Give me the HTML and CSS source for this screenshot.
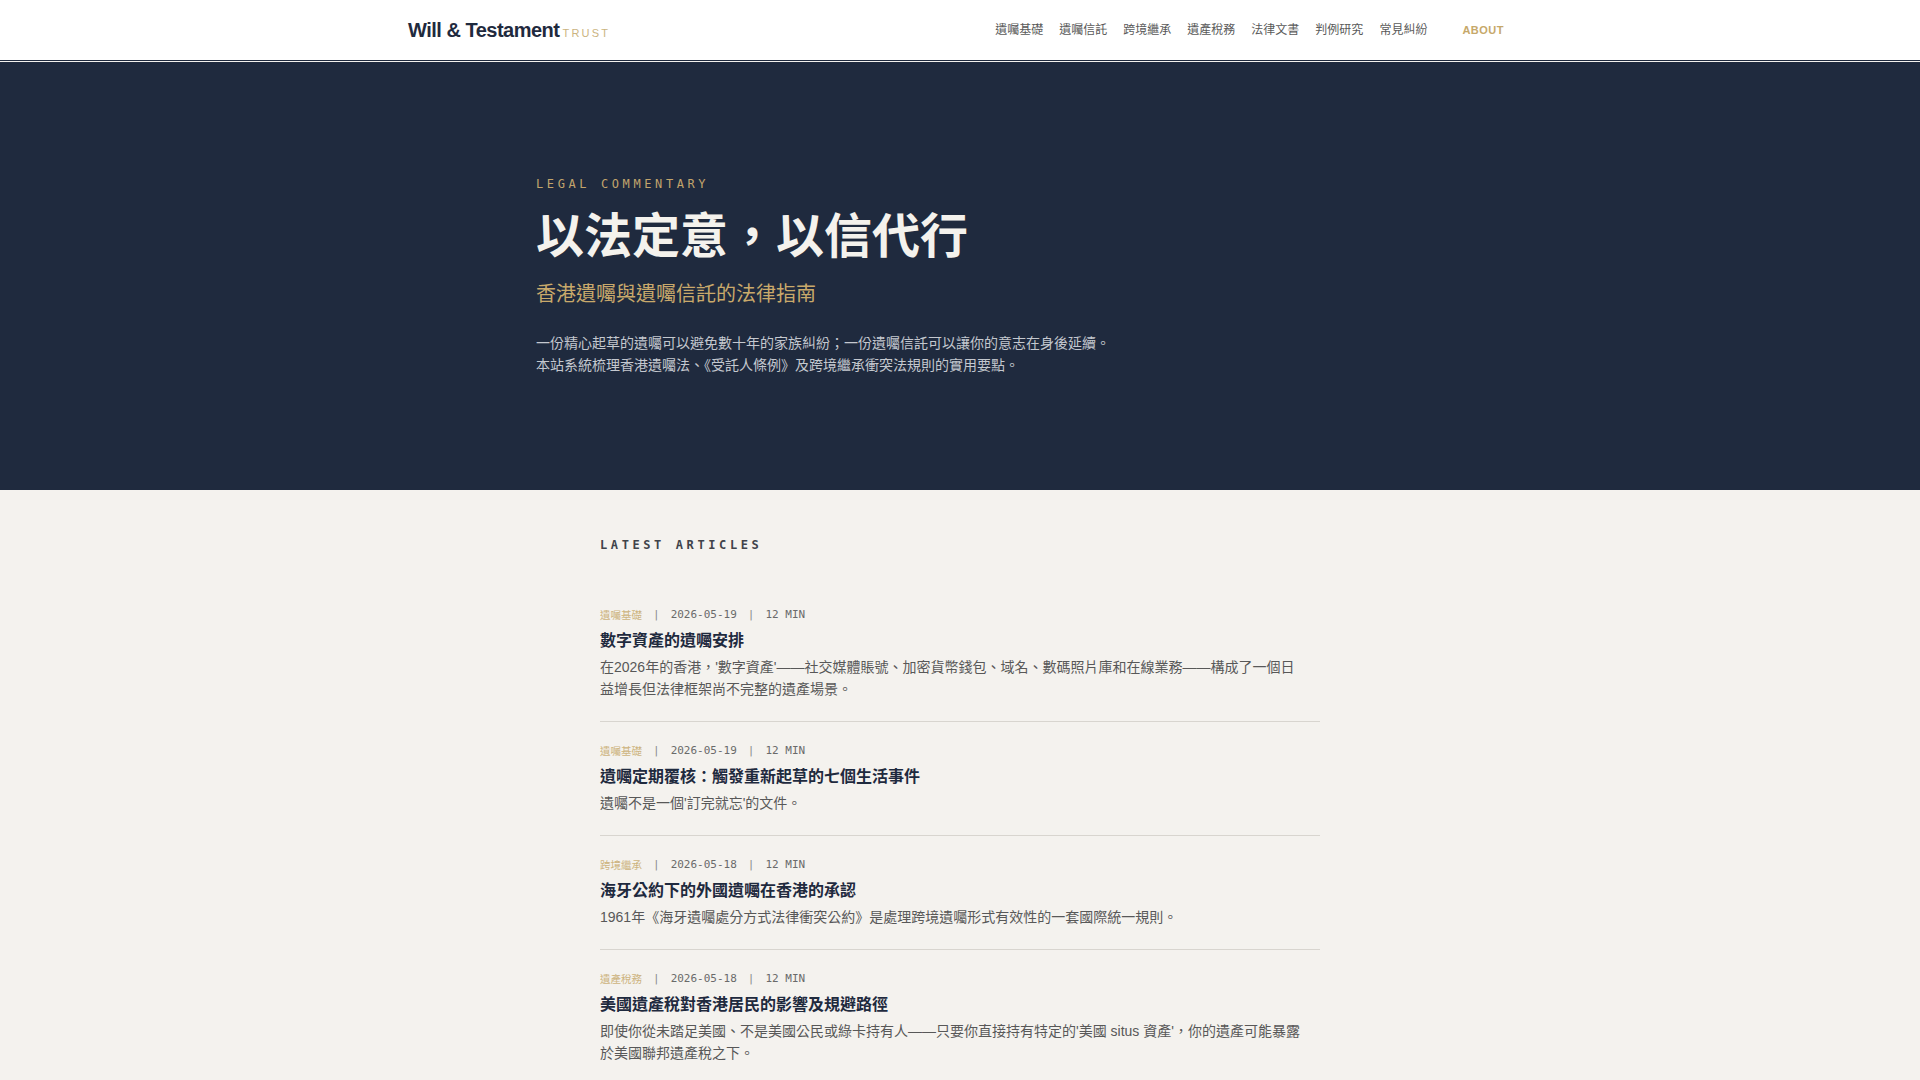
FILE: index.html
```html
<!DOCTYPE html>
<html lang="zh-Hant">
<head>
<meta charset="utf-8">
<title>Will &amp; Testament Trust</title>
<link rel="stylesheet" href="styles.css">
</head>
<body>
<header class="site-header">
  <div class="header-inner">
    <a class="logo" href="#"><span class="logo-main">Will &amp; Testament</span><span class="logo-sub">TRUST</span></a>
    <nav class="nav">
      <a href="#" class="nav-link">遺囑基礎</a>
      <a href="#" class="nav-link">遺囑信託</a>
      <a href="#" class="nav-link">跨境繼承</a>
      <a href="#" class="nav-link">遺產稅務</a>
      <a href="#" class="nav-link">法律文書</a>
      <a href="#" class="nav-link">判例研究</a>
      <a href="#" class="nav-link">常見糾紛</a>
      <a href="#" class="nav-link nav-about">ABOUT</a>
    </nav>
  </div>
</header>

<section class="hero">
  <div class="hero-inner">
    <p class="eyebrow">LEGAL COMMENTARY</p>
    <h1 class="hero-title">以法定意，以信代行</h1>
    <p class="hero-subtitle">香港遺囑與遺囑信託的法律指南</p>
    <p class="hero-text">一份精心起草的遺囑可以避免數十年的家族糾紛；一份遺囑信託可以讓你的意志在身後延續。<br>本站系統梳理香港遺囑法、《受託人條例》及跨境繼承衝突法規則的實用要點。</p>
  </div>
</section>

<main class="articles">
  <div class="articles-inner">
    <h2 class="section-title">LATEST ARTICLES</h2>

    <article class="article">
      <div class="meta"><span class="cat">遺囑基礎</span><span class="sep">|</span><span class="date">2026-05-19</span><span class="sep">|</span><span class="read">12 MIN</span></div>
      <h3 class="article-title">數字資產的遺囑安排</h3>
      <p class="excerpt">在2026年的香港，'數字資產'——社交媒體賬號、加密貨幣錢包、域名、數碼照片庫和在線業務——構成了一個日益增長但法律框架尚不完整的遺產場景。</p>
    </article>

    <article class="article">
      <div class="meta"><span class="cat">遺囑基礎</span><span class="sep">|</span><span class="date">2026-05-19</span><span class="sep">|</span><span class="read">12 MIN</span></div>
      <h3 class="article-title">遺囑定期覆核：觸發重新起草的七個生活事件</h3>
      <p class="excerpt">遺囑不是一個'訂完就忘'的文件。</p>
    </article>

    <article class="article">
      <div class="meta"><span class="cat">跨境繼承</span><span class="sep">|</span><span class="date">2026-05-18</span><span class="sep">|</span><span class="read">12 MIN</span></div>
      <h3 class="article-title">海牙公約下的外國遺囑在香港的承認</h3>
      <p class="excerpt">1961年《海牙遺囑處分方式法律衝突公約》是處理跨境遺囑形式有效性的一套國際統一規則。</p>
    </article>

    <article class="article">
      <div class="meta"><span class="cat">遺產稅務</span><span class="sep">|</span><span class="date">2026-05-18</span><span class="sep">|</span><span class="read">12 MIN</span></div>
      <h3 class="article-title">美國遺產稅對香港居民的影響及規避路徑</h3>
      <p class="excerpt">即使你從未踏足美國、不是美國公民或綠卡持有人——只要你直接持有特定的'美國 situs 資產'，你的遺產可能暴露於美國聯邦遺產稅之下。</p>
    </article>
  </div>
</main>
</body>
</html>
```

FILE: styles.css
```css
* {
  box-sizing: border-box;
}

html, body {
  margin: 0;
  padding: 0;
}

body {
  background: #f4f2ee;
  font-family: "Liberation Sans", "Noto Sans CJK TC", sans-serif;
  color: #333;
}

a {
  text-decoration: none;
  color: inherit;
}

p, h1, h2, h3 {
  margin: 0;
}

/* Header */
.site-header {
  background: #ffffff;
  border-bottom: 1px solid #1f2a3e;
  margin-bottom: 1px;
}

.header-inner {
  max-width: 1152px;
  margin: 0 auto;
  padding: 0 24px;
  height: 60px;
  display: flex;
  align-items: center;
  justify-content: space-between;
}

.logo {
  display: flex;
  align-items: baseline;
}

.logo-main {
  font-family: "Liberation Sans", sans-serif;
  font-weight: 700;
  font-size: 20px;
  letter-spacing: -0.5px;
  color: #1f2a3e;
}

.logo-sub {
  font-family: "Liberation Sans", sans-serif;
  font-size: 11px;
  letter-spacing: 2.2px;
  color: #cbb47f;
  margin-left: 3px;
}

.nav {
  display: flex;
  align-items: center;
}

.nav-link {
  padding: 0 8px;
  font-size: 12px;
  line-height: 20px;
  color: #5a5a5a;
}

.nav-about {
  margin-left: 19px;
  font-family: "Liberation Sans", sans-serif;
  font-weight: 700;
  font-size: 11px;
  letter-spacing: 0.5px;
  color: #c6a86a;
}

/* Hero */
.hero {
  background: #1f2a3e;
  padding: 112px 0 114px;
}

.hero-inner {
  max-width: 848px;
  margin: 0 auto;
}

.eyebrow {
  font-family: "DejaVu Sans Mono", monospace;
  font-size: 12px;
  line-height: 20px;
  letter-spacing: 3.6px;
  color: #c2a46c;
}

.hero-title {
  margin-top: 10px;
  font-family: "Noto Sans CJK TC", sans-serif;
  font-weight: 700;
  font-size: 48px;
  line-height: 57.6px;
  color: #f4f2ed;
}

.hero-subtitle {
  margin-top: 17px;
  font-family: "Noto Sans CJK TC", sans-serif;
  font-size: 20px;
  line-height: 28px;
  color: #c9a96b;
}

.hero-text {
  margin-top: 25px;
  font-size: 14px;
  line-height: 22px;
  color: #c4c8cf;
}

/* Articles */
.articles {
  padding: 47px 0 60px;
}

.articles-inner {
  max-width: 720px;
  margin: 0 auto;
}

.section-title {
  font-family: "DejaVu Sans Mono", monospace;
  font-weight: 700;
  font-size: 12px;
  line-height: 16px;
  letter-spacing: 3.6px;
  color: #40434a;
  margin-bottom: 33px;
}

.article {
  padding: 21px 0 21px;
  border-bottom: 1px solid #d8d5cf;
}

.meta {
  display: flex;
  align-items: center;
  height: 16px;
  line-height: 16px;
}

.cat {
  font-size: 10.5px;
  line-height: 16px;
  color: #cdb480;
}

.sep {
  margin: 0 11px;
  font-family: "DejaVu Sans Mono", monospace;
  font-size: 11px;
  line-height: 16px;
  color: #8a8a8a;
}

.date,
.read {
  font-family: "DejaVu Sans Mono", monospace;
  font-size: 11px;
  line-height: 16px;
  color: #6a6a6a;
}

.article-title {
  margin-top: 4px;
  font-family: "Noto Sans CJK TC", sans-serif;
  font-weight: 700;
  font-size: 16px;
  line-height: 24px;
  color: #1f2a3e;
}

.excerpt {
  margin-top: 5px;
  max-width: 704px;
  font-size: 14px;
  line-height: 22px;
  color: #585858;
}
```
